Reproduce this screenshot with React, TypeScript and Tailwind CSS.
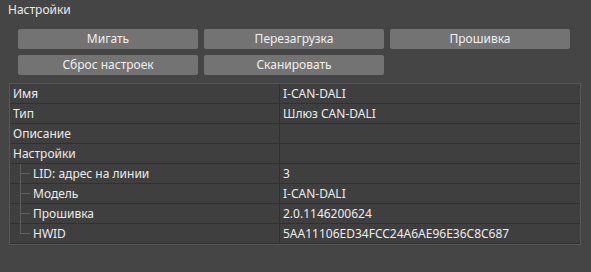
const rows: { label: string; value: string; child?: boolean; last?: boolean }[] = [
  { label: "Имя", value: "I-CAN-DALI" },
  { label: "Тип", value: "Шлюз CAN-DALI" },
  { label: "Описание", value: "" },
  { label: "Настройки", value: "" },
  { label: "LID: адрес на линии", value: "3", child: true },
  { label: "Модель", value: "I-CAN-DALI", child: true },
  { label: "Прошивка", value: "2.0.1146200624", child: true },
  { label: "HWID", value: "5AA11106ED34FCC24A6AE96E36C8C687", child: true, last: true },
];

function Btn({ label }: { label: string }) {
  return (
    <button className="h-[20px] w-[180px] rounded-[2px] bg-[#737373] text-[12px] leading-[20px] text-[#f0f0f0]">
      {label}
    </button>
  );
}

export default function App() {
  return (
    <div
      className="flex h-[272px] w-[591px] flex-col bg-[#454545] text-[#ececec]"
      style={{ fontFamily: '"Noto Sans", "Open Sans", sans-serif' }}
    >
      <div className="pl-2 pt-[2px] text-[12px] leading-[16px]">Настройки</div>
      <div className="ml-[18px] mt-[11px] grid grid-cols-[180px_180px_180px] gap-[6px]">
        <Btn label="Мигать" />
        <Btn label="Перезагрузка" />
        <Btn label="Прошивка" />
        <Btn label="Сброс настроек" />
        <Btn label="Сканировать" />
      </div>
      <div className="ml-[9px] mt-[8px] w-[572px] border border-[#575757] bg-[#3f3f3f]">
        {rows.map((r) => (
          <div key={r.label} className="relative flex h-[20px] border-b border-[#313131] text-[12px] leading-[19px]">
            {r.child && (
              <>
                <span
                  className={`absolute left-[10px] top-0 w-px bg-[#5e5e5e] ${r.last ? "h-[10px]" : "h-[20px]"}`}
                />
                <span className="absolute left-[10px] top-[9px] h-px w-[10px] bg-[#5e5e5e]" />
              </>
            )}
            <div
              className={`w-[270px] shrink-0 border-r border-[#313131] ${r.child ? "pl-[23px]" : "pl-[3px]"}`}
            >
              {r.label}
            </div>
            <div className="pl-[3px]">{r.value}</div>
          </div>
        ))}
      </div>
    </div>
  );
}
